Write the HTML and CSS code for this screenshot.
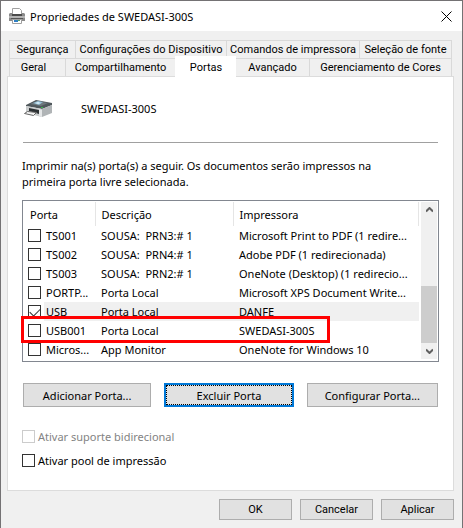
FILE: index.html
```html
<!DOCTYPE html>
<html lang="pt-BR">
<head>
<meta charset="utf-8">
<meta name="viewport" content="width=device-width, initial-scale=1">
<title>Propriedades de SWEDASI-300S</title>
<link rel="stylesheet" href="styles.css">
</head>
<body>
<main class="dialog">
  <header class="titlebar">
    <svg class="title-icon" viewBox="0 0 16 16" aria-hidden="true">
      <path fill="#fff" stroke="#a0a0a0" d="M3.500 7V.5h7l2 2V7"/>
      <path fill="#8a8a8a" d="M1 5h2v2h10V5h2l1 1v7H0V6z"/>
      <path fill="#4a4a4a" d="M3 6h10v2H3z"/>
      <path fill="#b4b4b4" d="M0 8h16v2H0z"/>
      <path fill="#555" d="M2 10h12v1H2z"/>
      <path fill="#fff" stroke="#a0a0a0" d="M3.500 11.500h9v4h-9z"/>
      <path fill="#2f7fc4" d="M5 12h4v2H5z"/>
      <path fill="#5fa35b" d="M9 12h2v1H9z"/>
    </svg>
    <h1 class="title">Propriedades de SWEDASI-300S</h1>
    <button class="close" type="button" aria-label="Fechar">
      <svg viewBox="0 0 11 11" aria-hidden="true"><path d="M.5.5l10 10M10.500.5l-10 10"/></svg>
    </button>
  </header>

  <div class="body">
    <div class="tabs" role="tablist">
      <div class="tab-row tab-row-back">
        <button class="tab" type="button" role="tab">Segurança</button>
        <button class="tab" type="button" role="tab">Configurações do Dispositivo</button>
        <button class="tab" type="button" role="tab">Comandos de impressora</button>
        <button class="tab" type="button" role="tab">Seleção de fonte</button>
      </div>
      <div class="tab-row tab-row-front">
        <button class="tab" type="button" role="tab">Geral</button>
        <button class="tab" type="button" role="tab">Compartilhamento</button>
        <button class="tab tab-active" type="button" role="tab" aria-selected="true">Portas</button>
        <button class="tab" type="button" role="tab">Avançado</button>
        <button class="tab" type="button" role="tab">Gerenciamento de Cores</button>
      </div>
    </div>

    <section class="panel" role="tabpanel">
      <div class="device">
        <svg class="device-icon" viewBox="0 0 28 19" aria-hidden="true">
          <path fill="#50585c" d="M2 6L12 1l16 3v2l-10 4L2 7z"/>
          <path fill="#6f787d" d="M6 5l7-3 11 2-7 3z"/>
          <path fill="#8fb9d0" d="M9 4l5-2 5 1-4 3z"/>
          <path fill="#d6eef9" d="M11 4l3-1 3 1-3 1z"/>
          <path fill="#c9cccd" d="M2 7l16 3v8L5 15l-3-1z"/>
          <path fill="#b0b4b6" d="M18 10l10-4v8l-10 4z"/>
          <path fill="#e4e6e7" d="M15 10l3 1v7l-3-1z"/>
          <path fill="#2b3033" d="M5 9l10 2v4L5 12z"/>
          <path fill="#f4f4f4" stroke="#666" d="M3.500 12.500l9 1-3 3-9-2z"/>
          <path fill="#35b84a" d="M17 8h2v1h-2z"/>
        </svg>
        <span>SWEDASI-300S</span>
      </div>
      <hr class="rule">
      <p class="intro">Imprimir na(s) porta(s) a seguir. Os documentos serão impressos na primeira porta livre selecionada.</p>

      <div class="list">
        <table class="ports">
          <colgroup><col class="col-check"><col class="col-port"><col class="col-desc"><col></colgroup>
          <thead>
            <tr><th colspan="2">Porta</th><th>Descrição</th><th>Impressora</th></tr>
          </thead>
          <tbody>
            <tr><td><input class="check" type="checkbox" id="p1"></td><td><label for="p1">TS001</label></td><td>SOUSA:&nbsp; PRN3:# 1</td><td>Microsoft Print to PDF (1 redire...</td></tr>
            <tr><td><input class="check" type="checkbox" id="p2"></td><td><label for="p2">TS002</label></td><td>SOUSA:&nbsp; PRN4:# 1</td><td>Adobe PDF (1 redirecionada)</td></tr>
            <tr><td><input class="check" type="checkbox" id="p3"></td><td><label for="p3">TS003</label></td><td>SOUSA:&nbsp; PRN2:# 1</td><td>OneNote (Desktop) (1 redirecio...</td></tr>
            <tr><td><input class="check" type="checkbox" id="p4"></td><td><label for="p4">PORTP...</label></td><td>Porta Local</td><td>Microsoft XPS Document Write...</td></tr>
            <tr class="selected"><td><input class="check" type="checkbox" id="p5" checked></td><td><label for="p5">USB</label></td><td>Porta Local</td><td>DANFE</td></tr>
            <tr><td><input class="check" type="checkbox" id="p6"></td><td><label for="p6">USB001</label></td><td>Porta Local</td><td>SWEDASI-300S</td></tr>
            <tr><td><input class="check" type="checkbox" id="p7"></td><td><label for="p7">Micros...</label></td><td>App Monitor</td><td>OneNote for Windows 10</td></tr>
          </tbody>
        </table>
        <div class="scrollbar" aria-hidden="true">
          <svg class="arrow" viewBox="0 0 7 6"><path d="M0 4.500L3.500 1 7 4.500"/></svg>
          <div class="track"><div class="thumb"></div></div>
          <svg class="arrow" viewBox="0 0 7 6"><path d="M0 1.500L3.500 5 7 1.500"/></svg>
        </div>
        <div class="marker"></div>
      </div>

      <div class="actions">
        <button class="btn" type="button">Adicionar Porta...</button>
        <button class="btn btn-focus" type="button">Excluir Porta</button>
        <button class="btn" type="button">Configurar Porta...</button>
      </div>

      <div class="options">
        <label class="option option-disabled"><input class="check" type="checkbox" disabled>Ativar suporte bidirecional</label>
        <label class="option"><input class="check" type="checkbox">Ativar pool de impressão</label>
      </div>
    </section>

    <footer class="footer">
      <button class="btn btn-small" type="button">OK</button>
      <button class="btn btn-small" type="button">Cancelar</button>
      <button class="btn btn-small" type="button">Aplicar</button>
    </footer>
  </div>
</main>
</body>
</html>
```
FILE: styles.css
```css
* { box-sizing: border-box; }

body {
  margin: 0;
  background: #f0f0f0;
  color: #000;
  font: 11px/15px "Noto Sans", "Open Sans", sans-serif;
}

button, input { font: inherit; color: inherit; margin: 0; }

.dialog {
  display: flex;
  flex-direction: column;
  min-height: 100vh;
  border: 1px solid #747274;
  background: #f0f0f0;
}

.titlebar {
  display: flex;
  align-items: center;
  height: 30px;
  padding: 0 10px 0 8px;
  background: #fff;
}
.title-icon { width: 16px; height: 16px; }
.title { flex: 1; margin: 0 0 0 5px; font-size: 11px; font-weight: 400; }
.close { display: flex; padding: 0; border: 0; background: none; }
.close svg { width: 11px; height: 11px; fill: none; stroke: #000; }

.body { padding: 9px 8px 8px 6px; }

.tabs {
  padding: 0 2px;
  font-family: Roboto, "Liberation Sans", sans-serif;
}
.tab-row { display: grid; height: 18px; }
.tab-row-back { grid-template-columns: 66fr 151fr 133fr 93fr; }
.tab-row-front { grid-template-columns: 56fr 110fr 60fr 74fr 143fr; }
.tab {
  padding: 0;
  border: 1px solid #d9d9d9;
  border-width: 1px 0 0 1px;
  background: #f0f0f0;
  white-space: nowrap;
}
.tab:last-child { border-right-width: 1px; }
.tab-row-front .tab:first-child { padding-right: 8px; }
.tab-active {
  z-index: 1;
  margin: -2px -1px -1px 0;
  border-color: #fff;
  background: #fff;
}

.panel {
  padding: 20px 14px 22px;
  border: 1px solid #dcdcdc;
  background: #fff;
}

.device { display: flex; align-items: center; gap: 29px; height: 22px; padding-left: 2px; }
.device-icon { width: 28px; height: 19px; }

.rule { height: 1px; margin: 23px 1px 15px; border: 0; background: #a0a0a0; }
.intro { margin: 0 0 10px; padding-right: 40px; line-height: 16px; }

.list {
  position: relative;
  display: flex;
  padding: 1px 1px 2px;
  border: 1px solid #828790;
}
.ports {
  flex: 1;
  width: 100%;
  min-width: 0;
  table-layout: fixed;
  border-collapse: collapse;
}
.col-check { width: 20px; }
.col-port { width: 51px; }
.col-desc { width: 138px; }
.ports th {
  height: 24px;
  padding: 0 0 0 6px;
  border-right: 1px solid #e5e5e5;
  font-weight: 400;
  text-align: left;
}
.ports td { height: 19px; padding: 0 0 0 6px; white-space: nowrap; }
.ports td:first-child { padding: 0 0 0 4px; }
.ports td:nth-child(2) { padding-left: 2px; }
.selected td:not(:first-child) { background: #f0f0f0; }

.check {
  display: block;
  flex: none;
  appearance: none;
  width: 13px;
  height: 13px;
  border: 1px solid #333;
  background: #fff;
}
.check:checked::before {
  content: "";
  display: block;
  width: 9px;
  height: 5px;
  margin: 2px 0 0 1px;
  border: solid #333;
  border-width: 0 0 1px 1px;
  transform: rotate(-45deg);
}
.check:disabled { border-color: #ccc; }

.scrollbar {
  display: flex;
  flex: none;
  flex-direction: column;
  align-items: center;
  width: 16px;
  margin-left: 2px;
  padding: 5px 0;
  background: #f0f0f0;
}
.arrow { width: 7px; height: 6px; fill: none; stroke: #606060; stroke-width: 2; }
.track { display: flex; flex: 1; flex-direction: column; justify-content: flex-end; width: 100%; padding: 6px 0 5px; }
.thumb { height: 46%; background: #cdcdcd; }

.marker {
  position: absolute;
  left: -2px;
  right: 108px;
  bottom: 18px;
  height: 27px;
  border: 3px solid #f00;
  pointer-events: none;
}

.actions {
  display: grid;
  grid-template-columns: 128fr 129fr 131fr;
  gap: 13px;
  margin: 21px 1px 0;
}
.btn {
  height: 24px;
  padding: 0;
  border: 1px solid #adadad;
  background: #e1e1e1;
}
.btn-focus { border: 2px solid #0078d7; outline: 1px dotted #000; outline-offset: -3px; }
.btn-small {
  width: 73px;
  height: 21px;
  font-family: Roboto, "Liberation Sans", sans-serif;
}

.options { display: flex; flex-direction: column; gap: 9px; margin-top: 22px; }
.option { display: flex; align-items: center; gap: 3px; }
.option-disabled { color: #838383; }

.footer { display: flex; justify-content: flex-end; gap: 8px; margin-top: 8px; }
```
